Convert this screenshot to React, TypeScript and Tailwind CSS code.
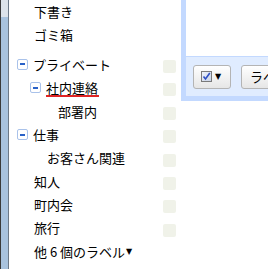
import React from 'react';

interface LabelRow {
  name: string;
  indent: number; // px from sidebar edge to the text
  toggle?: boolean;
  underline?: boolean;
}

const labels: LabelRow[] = [
  { name: 'プライベート', indent: 24, toggle: true },
  { name: '社内連絡', indent: 37, toggle: true, underline: true },
  { name: '部署内', indent: 49 },
  { name: '仕事', indent: 24, toggle: true },
  { name: 'お客さん関連', indent: 38 },
  { name: '知人', indent: 25 },
  { name: '町内会', indent: 25 },
  { name: '旅行', indent: 25 },
];

const MinusBox = () => (
  <span className="w-[11px] h-[11px] mr-[5px] shrink-0 rounded-[2px] border border-[#a9c2ea] bg-white flex items-center justify-center">
    <span className="block w-[5px] h-[2px] bg-[#2a62c8]" />
  </span>
);

const Sidebar = () => (
  <div className="w-[172px] shrink-0 flex flex-col text-[13px] text-black">
    <div className="h-[23.4px] flex items-center pl-[25px]">下書き</div>
    <div className="h-[23.4px] flex items-center pl-[25px]">ゴミ箱</div>
    <div className="h-[6px]" />
    {labels.map((l) => (
      <div
        key={l.name}
        className="h-[23.4px] flex items-center"
        style={{ paddingLeft: l.toggle ? l.indent - 16 : l.indent }}
      >
        {l.toggle && <MinusBox />}
        {l.underline ? (
          <span className="inline-block leading-[15px] border-b-2 border-[#e02424] mb-[-2px] pr-[1px]">
            {l.name}
          </span>
        ) : (
          <span>{l.name}</span>
        )}
        <span className="ml-auto mr-[5px] mt-[4px] w-[13px] h-[13px] rounded-[2px] bg-[#f0f2e9]" />
      </div>
    ))}
    <div className="h-[23.4px] flex items-center pl-[25px] whitespace-nowrap">
      他 6 個のラベル
      <span className="text-[8px] font-['DejaVu_Sans'] ml-[1px]">▼</span>
    </div>
  </div>
);

const Toolbar = () => (
  <div className="h-[40px] bg-[#e0ecff] border-t border-[#c3d9ff] flex items-center pl-[7px] gap-[10px]">
    <button className="w-[38px] h-[24px] shrink-0 rounded-[3px] border border-[#b4b4b4] bg-gradient-to-b from-white to-[#e6e6e6] flex items-center pl-[7px] gap-[3px]">
      <span className="w-[11px] h-[11px] border border-[#7a7a7a] bg-gradient-to-br from-[#eef2fb] to-[#c9d3e6] flex items-center justify-center">
        <svg width="9" height="9" viewBox="0 0 9 9">
          <path d="M1.5 4.5 L3.5 7 L7.8 1" fill="none" stroke="#2f4fc4" strokeWidth="1.6" />
        </svg>
      </span>
      <span className="text-[8px] leading-none font-['DejaVu_Sans'] text-black">▼</span>
    </button>
    <button className="w-[80px] h-[24px] shrink-0 rounded-[3px] border border-[#b4b4b4] bg-gradient-to-b from-white to-[#e6e6e6] text-left pl-[8px] text-[13px] text-black whitespace-nowrap">
      ラベル
    </button>
  </div>
);

export default function App() {
  return (
    <div className="w-[268px] h-[269px] overflow-hidden bg-white flex font-['Noto_Sans_CJK_JP',sans-serif]">
      <div className="w-[9px] shrink-0 flex">
        <div className="w-[1px] bg-[#3a3a3a]" />
        <div className="w-[7px] flex flex-col">
          <div className="h-[17px] bg-[#dde3ea]" />
          <div className="flex-1 bg-[#a9c3de]" />
        </div>
        <div className="w-[1px] bg-[#6d7987]" />
      </div>
      <Sidebar />
      <div className="flex-1 min-w-0 overflow-hidden">
        <div className="w-[320px] border-l-[5px] border-b-[5px] border-[#c3d9ff]">
          <div className="h-[56px] bg-white" />
          <Toolbar />
        </div>
      </div>
    </div>
  );
}
